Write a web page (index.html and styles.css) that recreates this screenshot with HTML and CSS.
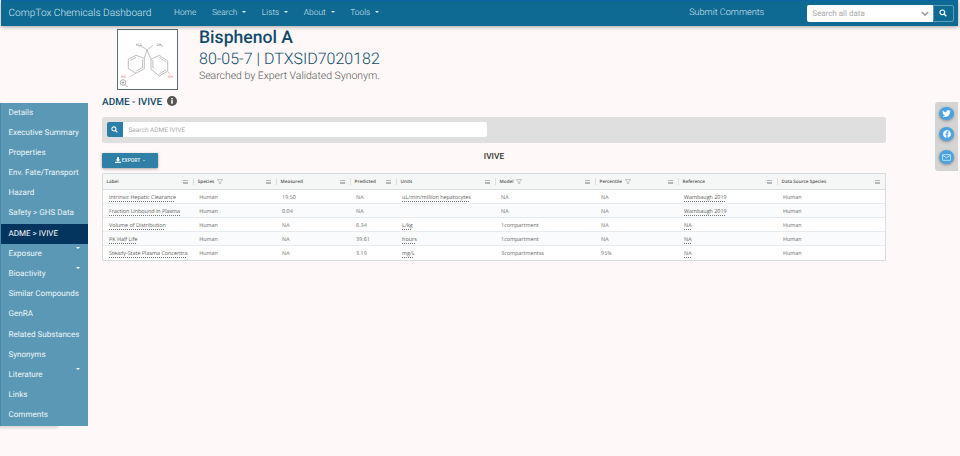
FILE: index.html
```html
<!DOCTYPE html>
<html lang="en">
<head>
<meta charset="utf-8">
<title>Bisphenol A - ADME IVIVE</title>
<link rel="stylesheet" href="styles.css">
</head>
<body>
<header class="navbar">
  <a class="brand">CompTox Chemicals Dashboard</a>
  <nav class="nav-links">
    <a>Home</a>
    <a class="caret">Search</a>
    <a class="caret">Lists</a>
    <a class="caret">About</a>
    <a class="caret">Tools</a>
  </nav>
  <a class="submit">Submit Comments</a>
  <div class="global-search">
    <div class="global-input"><span>Search all data</span>
      <svg class="chev" viewBox="0 0 10 6" width="8" height="5"><path d="M1 1l4 4 4-4" fill="none" stroke="#999" stroke-width="1.8"/></svg>
    </div>
    <button class="global-btn"><svg viewBox="0 0 12 12" width="8" height="8"><circle cx="5" cy="5" r="3.5" fill="none" stroke="#fff" stroke-width="1.8"/><path d="M7.6 7.6L11 11" stroke="#fff" stroke-width="2"/></svg></button>
  </div>
</header>

<div class="page">
  <aside class="sidebar">
    <a>Details</a>
    <a>Executive Summary</a>
    <a>Properties</a>
    <a>Env. Fate/Transport</a>
    <a>Hazard</a>
    <a>Safety &gt; GHS Data</a>
    <a class="active">ADME &gt; IVIVE</a>
    <a class="more">Exposure</a>
    <a class="more">Bioactivity</a>
    <a>Similar Compounds</a>
    <a>GenRA</a>
    <a>Related Substances</a>
    <a>Synonyms</a>
    <a class="more">Literature</a>
    <a>Links</a>
    <a>Comments</a>
  </aside>

  <main class="content">
    <section class="chem-head">
      <div class="structure">
        <svg viewBox="0 0 59 59" width="59" height="59">
          <g fill="none" stroke="#8c8c8c" stroke-width=".55">
            <path d="M22.500 15.500L29 20l6-4.500M29 20l-2.700 8.300M29 20l4 9.300"/>
            <path d="M26.300 28.300v10.400L18 43.300l-7.700-4.600v-9.400L18 25.300zM24.500 29.500v8M18.500 41l6-3.500M12.200 30.500l5.800-3"/>
            <path d="M33 29.300l8.300-4 8.400 5.700v10L41.300 46 33 39.300zM41.500 27.500l6.500 4.500M48 40l-6.700 4M35 38l-.2-8"/>
          </g>
          <path d="M18 43.300l-6 3.200M49.700 41l2 3.500" stroke="#e99" stroke-width=".55"/>
          <text x="18" y="15.500" class="atom">H₃C</text>
          <text x="38.500" y="15.500" class="atom">CH₃</text>
          <text x="3" y="48" class="atom oh">HO</text>
          <text x="50" y="47.500" class="atom oh">OH</text>
          <g fill="none" stroke="#999" stroke-width=".8"><circle cx="5" cy="52.500" r="2.800"/><path d="M7 54.500l2.500 2.500M3.600 52.500h2.800M5 51.100v2.800"/></g>
        </svg>
      </div>
      <div class="chem-text">
        <h1>Bisphenol A</h1>
        <h2>80-05-7 | DTXSID7020182</h2>
        <p>Searched by Expert Validated Synonym.</p>
      </div>
    </section>

    <div class="section-title">
      <h3>ADME - IVIVE</h3>
      <svg class="info" viewBox="0 0 12 12" width="10" height="10"><circle cx="6" cy="6" r="6" fill="#555"/><rect x="5" y="5" width="2" height="4.200" fill="#fff"/><rect x="5" y="2.500" width="2" height="1.600" fill="#fff"/></svg>
    </div>

    <div class="search-bar">
      <span class="search-addon"><svg viewBox="0 0 12 12" width="7" height="7"><circle cx="5" cy="5" r="3.500" fill="none" stroke="#fff" stroke-width="1.800"/><path d="M7.600 7.600L11 11" stroke="#fff" stroke-width="2"/></svg></span>
      <div class="search-input">Search ADME IVIVE</div>
    </div>

    <div class="toolbar">
      <button class="export"><svg viewBox="0 0 10 10" width="6" height="6"><path d="M3.500 0h3v4H9L5 8 1 4h2.500zM0 8h10v2H0z" fill="#fff"/></svg>EXPORT<i class="mini-caret"></i></button>
      <div class="grid-title">IVIVE</div>
    </div>

    <div class="grid">
      <div class="row head">
        <div class="c c1">Label<i class="menu"></i></div>
        <div class="c c2">Species<svg class="filter" viewBox="0 0 8 7"><path d="M.5.500h7L5 3.500V6.500L3 5.500v-2z" fill="none" stroke="#888" stroke-width=".6"/></svg><i class="menu"></i></div>
        <div class="c c3">Measured<i class="menu"></i></div>
        <div class="c c4">Predicted<i class="menu"></i></div>
        <div class="c c5">Units<i class="menu"></i></div>
        <div class="c c6">Model<svg class="filter" viewBox="0 0 8 7"><path d="M.5.500h7L5 3.500V6.500L3 5.500v-2z" fill="none" stroke="#888" stroke-width=".6"/></svg><i class="menu"></i></div>
        <div class="c c7">Percentile<svg class="filter" viewBox="0 0 8 7"><path d="M.5.500h7L5 3.500V6.500L3 5.500v-2z" fill="none" stroke="#888" stroke-width=".6"/></svg><i class="menu"></i></div>
        <div class="c c8">Reference<i class="menu"></i></div>
        <div class="c c9">Data Source Species<i class="menu"></i></div>
      </div>
      <div class="row">
        <div class="c c1"><u>Intrinsic Hepatic Clearance</u></div><div class="c c2">Human</div><div class="c c3">19.50</div><div class="c c4">NA</div><div class="c c5"><u>uL/min/million hepatocytes</u></div><div class="c c6">NA</div><div class="c c7">NA</div><div class="c c8"><u>Wambaugh 2019</u></div><div class="c c9">Human</div>
      </div>
      <div class="row alt">
        <div class="c c1"><u>Fraction Unbound in Plasma</u></div><div class="c c2">Human</div><div class="c c3">0.04</div><div class="c c4">NA</div><div class="c c5"></div><div class="c c6">NA</div><div class="c c7">NA</div><div class="c c8"><u>Wambaugh 2019</u></div><div class="c c9">Human</div>
      </div>
      <div class="row">
        <div class="c c1"><u>Volume of Distribution</u></div><div class="c c2">Human</div><div class="c c3">NA</div><div class="c c4">6.34</div><div class="c c5"><u>L/kg</u></div><div class="c c6">1compartment</div><div class="c c7">NA</div><div class="c c8"><u>NA</u></div><div class="c c9">Human</div>
      </div>
      <div class="row alt">
        <div class="c c1"><u>PK Half Life</u></div><div class="c c2">Human</div><div class="c c3">NA</div><div class="c c4">39.61</div><div class="c c5"><u>hours</u></div><div class="c c6">1compartment</div><div class="c c7">NA</div><div class="c c8"><u>NA</u></div><div class="c c9">Human</div>
      </div>
      <div class="row">
        <div class="c c1"><u>Steady-State Plasma Concentra</u></div><div class="c c2">Human</div><div class="c c3">NA</div><div class="c c4">3.19</div><div class="c c5"><u>mg/L</u></div><div class="c c6">3compartmentss</div><div class="c c7">95%</div><div class="c c8"><u>NA</u></div><div class="c c9">Human</div>
      </div>
    </div>
  </main>
</div>

<div class="social">
  <span class="soc"><svg viewBox="0 0 24 24" width="9" height="9"><path fill="#fff" d="M23 5c-.8.400-1.700.600-2.600.700.900-.600 1.600-1.400 2-2.500-.900.500-1.900.900-2.900 1.100A4.600 4.600 0 0 0 11.700 8.500C7.900 8.300 4.500 6.500 2.200 3.700c-1.200 2.100-.600 4.800 1.400 6.100-.700 0-1.400-.200-2-.600 0 2.200 1.600 4.100 3.700 4.600-.700.200-1.400.200-2.100.100.600 1.800 2.300 3.100 4.300 3.200A9.300 9.300 0 0 1 1 19c2.100 1.300 4.500 2.100 7.100 2.100 8.600 0 13.400-7.200 13.100-13.700.900-.600 1.700-1.400 1.800-2.400z"/></svg></span>
  <span class="soc"><svg viewBox="0 0 24 24" width="8" height="8"><circle cx="12" cy="12" r="11.500" fill="#fff"/><path fill="#4aa3e0" d="M13.500 24v-9.500h3l.5-3.500h-3.500V9c0-1 .4-1.700 1.800-1.700H17V4.200c-.5-.1-1.500-.2-2.500-.2-2.600 0-4.400 1.600-4.400 4.500V11H7.200v3.500h2.900V24z"/></svg></span>
  <span class="soc mail"><svg viewBox="0 0 14 10" width="9" height="7"><rect x=".6" y=".6" width="12.800" height="8.800" rx="1" fill="none" stroke="#fff" stroke-width="1"/><path d="M1 1.500l6 4 6-4" fill="none" stroke="#fff" stroke-width="1"/></svg></span>
</div>
</body>
</html>
```
FILE: styles.css
```css
* { box-sizing: border-box; }
html, body { margin: 0; height: 100%; }
body { background: #fef9f8; color: #333; font-family: Roboto, "Liberation Sans", sans-serif; overflow: hidden; text-rendering: geometricPrecision; }
svg { display: block; }

.navbar { height: 25.500px; margin: 0 2px 0 1px; background: #0e6993; border-top: 1px solid #0a64a6; box-shadow: 0 1px 4px rgba(0,0,0,.35); display: flex; align-items: center; padding: 0 4.300px 0 7.500px; color: #d6e6ee; font-weight: 300; position: relative; z-index: 2; }
.brand { font-size: 10.150px; width: 165.500px; }
.nav-links { display: flex; gap: 15.500px; font-size: 8.400px; }
.nav-links .caret::after { content: ""; display: inline-block; margin-left: 5px; vertical-align: 2px; border: 2.200px solid transparent; border-top-color: #e5eff4; border-bottom: 0; }
.submit { margin-left: auto; font-size: 9.100px; margin-right: 42.500px; }
.global-search { display: flex; width: 147px; height: 16.500px; }
.global-input { flex: 1; background: #fff; border-radius: 2px 0 0 2px; display: flex; align-items: center; justify-content: space-between; padding: 0 4px 0 5.500px; font-size: 8px; color: #aaa; font-weight: 400; }
.global-btn { width: 21px; padding: 0; background: #0e6993; border: 1px solid #5f9db8; border-radius: 0 2px 2px 0; display: flex; align-items: center; justify-content: center; }

.page { display: flex; align-items: flex-start; }
.sidebar { width: 88px; margin-top: 77px; background: #5b98b5; border-left: 1px solid #4a8aa9; display: flex; flex-direction: column; box-shadow: -30px 2px 3px rgba(0,0,0,.14); }
.sidebar a { height: 20.200px; line-height: 20px; padding-left: 7.500px; font-size: 8.050px; color: #eef5f8; position: relative; white-space: nowrap; }
.sidebar a.active { background: #03355e; color: #fff; }
.sidebar a.more::after { content: ""; position: absolute; right: 8px; top: 3px; border: 2.500px solid transparent; border-top-color: #fff; border-bottom: 0; }

.content { width: 784px; margin-left: 14px; }
.chem-head { display: flex; height: 67px; padding-top: 3.500px; }
.structure { width: 61px; height: 61px; margin-left: 14.500px; border: 1px solid #57716f; background: #fff; }
.atom { font-size: 3.500px; fill: #666; font-family: Roboto, sans-serif; }
.oh { fill: #e66; }
.chem-text { margin: -2.500px 0 0 21.500px; }
h1 { margin: 0; font-size: 17.600px; line-height: 22px; font-weight: 500; color: #124a6b; }
h2 { margin: 0; font-size: 16px; line-height: 20px; font-weight: 300; color: #124a6b; }
.chem-text p { margin: 0; font-size: 10.450px; line-height: 14px; font-weight: 300; color: #555; }

.section-title { display: flex; align-items: center; gap: 5px; height: 17px; margin-top: 1px; }
h3 { margin: 0; font-size: 10px; font-weight: 500; color: #124a6b; }
.info { margin-top: -2px; }

.search-bar { margin-top: 6.500px; height: 25.500px; background: #dfdfdf; border-radius: 3px; padding: 5px; display: flex; }
.search-addon { width: 15.500px; height: 15px; background: #2a7fa6; border-radius: 2px 0 0 2px; display: flex; align-items: center; justify-content: center; }
.search-input { width: 364px; height: 15px; line-height: 16px; background: #fff; padding-left: 6px; font-size: 6.500px; color: #aaa; border-radius: 0 2px 2px 0; }

.toolbar { display: flex; align-items: center; margin-top: 10px; height: 15.500px; }
.export { width: 56px; height: 15.500px; padding: 0; background: #2f7fa6; color: #e8f1f5; font: 500 5px Roboto, sans-serif; border: 0; border-radius: 1px; box-shadow: 0 1px 3px rgba(0,0,0,.35); display: flex; align-items: center; justify-content: center; gap: 1px; }
.mini-caret { margin-left: 2px; border: 1.500px solid transparent; border-top-color: #e8f1f5; border-bottom: 0; }
.grid-title { flex: 1; text-align: center; font-size: 8.400px; font-weight: 500; color: #333; padding: 0 56px 6px 0; }

.grid { margin-top: 5px; width: 784px; border: 1px solid #d9dcde; border-radius: 1px; background: #fff; font-family: "Open Sans", sans-serif; font-size: 5.400px; color: #6a6a6a; }
.row { display: flex; height: 14px; padding-top: 2px; align-items: center; border-bottom: 1px solid #e6ebef; }
.row:last-child { border-bottom: 0; }
.row.alt { background: #f9fbfd; }
.row.head { height: 16px; padding-top: 0; background: #f5f7f7; border-bottom: 1px solid #d9dde0; font-size: 4.600px; font-weight: 600; color: #555; }
.c { height: 10px; line-height: 8px; padding-left: 6px; white-space: nowrap; overflow: hidden; }
.head .c { display: flex; align-items: center; padding: 0 0 0 3.500px; height: 7px; overflow: visible; position: relative; }
.head .c + .c { border-left: 1px solid #dcdfe1; }
.c1 { width: 90.300px; } .c2 { width: 82.800px; } .c3 { width: 74px; } .c4 { width: 46px; } .c5 { width: 99px; }
.c6 { width: 100px; } .c7 { width: 83px; } .c8 { width: 99px; } .c9 { flex: 1; }
.c u { text-decoration: underline dotted #777 1px; text-underline-offset: 1.500px; color: #5c5c5c; }
.filter { width: 6px; height: 5.500px; margin-left: 3px; }
.menu { position: absolute; right: 5px; top: 2px; width: 5px; height: 4px; border-top: 1px solid #b5b5b5; border-bottom: 1px solid #b5b5b5; background: linear-gradient(#b5b5b5,#b5b5b5) center/100% 1px no-repeat; }

.social { position: absolute; right: 2px; top: 102px; width: 23px; height: 69px; background: #d4d4d4; border-radius: 3px 0 0 3px; display: flex; flex-direction: column; align-items: center; padding-top: 4.500px; }
.soc { width: 15px; height: 15px; border-radius: 50%; background: #4aa3e0; box-shadow: 0 1px 3px rgba(0,0,0,.35); display: flex; align-items: center; justify-content: center; margin-bottom: 7px; }
.soc.mail { margin-top: 2px; }
```
